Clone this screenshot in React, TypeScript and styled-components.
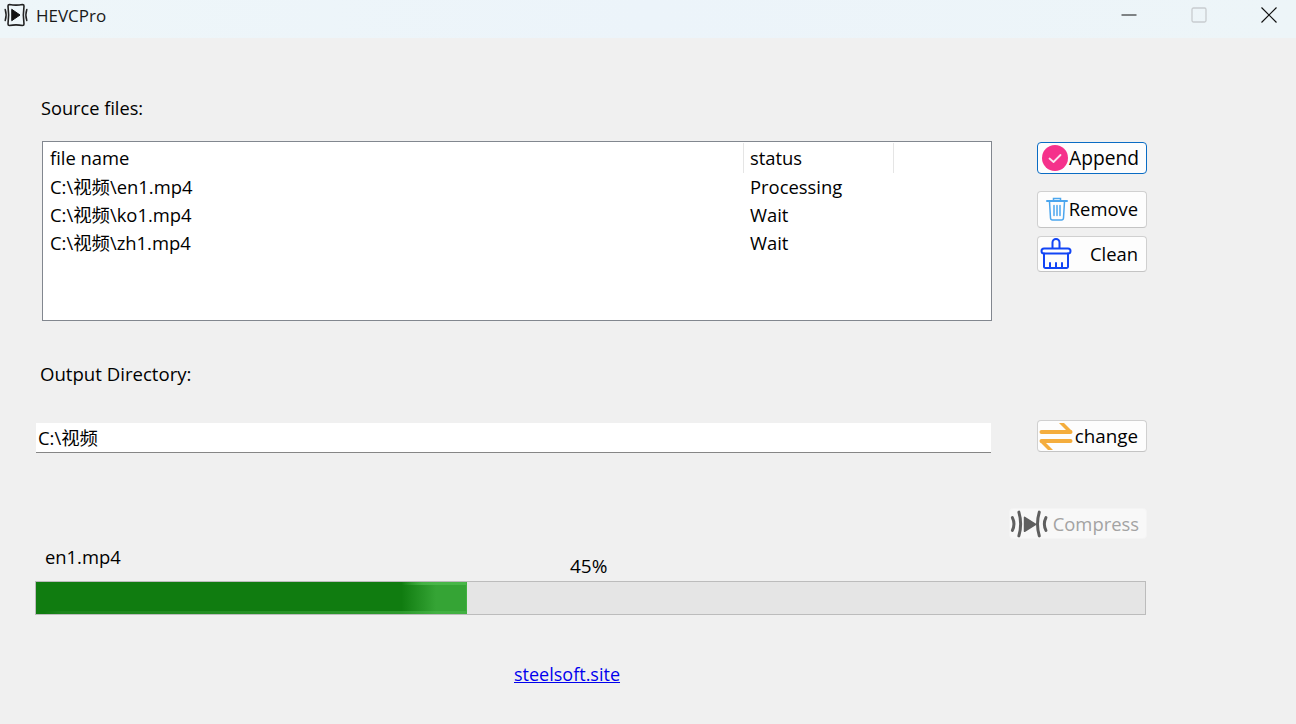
import React from "react";
import styled, { createGlobalStyle } from "styled-components";

const files = [
  { name: "C:\\视频\\en1.mp4", status: "Processing" },
  { name: "C:\\视频\\ko1.mp4", status: "Wait" },
  { name: "C:\\视频\\zh1.mp4", status: "Wait" },
];

const progress = 45;
// the native bar is drawn a little short of its value
const barWidth = 38.9;

const CompressIcon = () => (
  <svg width="38" height="38" viewBox="0 0 24 24" fill="none" stroke="#5f5f5f" strokeLinecap="round">
    <path d="M1.500 8c1.300 2.600 1.300 5.400 0 8" strokeWidth="1.900" />
    <path d="M5.600 4.500c1.500 5 1.500 10 0 15" strokeWidth="1.900" />
    <path d="M22.700 8c-1.300 2.600-1.300 5.400 0 8" strokeWidth="1.900" />
    <path d="M18.500 4.500c-1.500 5-1.500 10 0 15" strokeWidth="1.900" />
    <path d="M9.200 7.800l7 4.400-7 4.400z" fill="#5f5f5f" stroke="#5f5f5f" strokeWidth="1" strokeLinejoin="round" />
  </svg>
);

const AppLogo = () => (
  <LogoSvg width="24" height="24" viewBox="0 0 24 24" fill="none" stroke="#222" strokeLinecap="round">
    <path d="M5.500 1.500c4 .8 9 .8 13 0 1 0 1.500.5 1.500 1.500-.8 5.500-.8 12.500 0 18 0 1-.5 1.500-1.500 1.500-4-.8-9-.8-13 0-1 0-1.500-.5-1.500-1.500.8-5.500.8-12.500 0-18 0-1 .5-1.500 1.500-1.500z" strokeWidth="1.600" />
    <path d="M8 6.500l8 5.500-8 5.500z" fill="#111" stroke="#111" strokeWidth="1" strokeLinejoin="round" />
    <path d="M1.200 6.500c1.200 3.500 1.200 7.500 0 11" strokeWidth="1.500" />
    <path d="M22.800 6.500c-1.200 3.500-1.200 7.500 0 11" strokeWidth="1.500" />
  </LogoSvg>
);

const CheckIcon = () => (
  <svg width="26" height="26" viewBox="0 0 26 26">
    <circle cx="13" cy="13" r="13" fill="#f5318b" />
    <path d="M7.500 13.500l4 3.500 7-7" fill="none" stroke="#fbe3ee" strokeWidth="1.800" strokeLinecap="round" strokeLinejoin="round" />
  </svg>
);

const TrashIcon = () => (
  <svg width="22" height="24" viewBox="0 0 22 24" fill="none" stroke="#4ba6ee" strokeWidth="1.500" strokeLinecap="round">
    <path d="M1 4h20" strokeWidth="2" />
    <path d="M7.500 3.500V1.500h7v2" />
    <path d="M3.500 4.500l1 16.500c.1 1.200.8 2 2 2h9c1.200 0 1.900-.8 2-2l1-16.500" />
    <path d="M8 8.500v10M11 8.500v10M14 8.500v10" />
  </svg>
);

const BrushIcon = () => (
  <svg width="32" height="32" viewBox="0 0 32 32" fill="none" stroke="#1245f5" strokeWidth="2" strokeLinecap="round" strokeLinejoin="round">
    <path d="M12.500 10V4.500a3.500 3.500 0 0 1 7 0V10" />
    <rect x="1.500" y="10.500" width="29" height="5" rx="2.500" />
    <path d="M4 15.500v13.500a1.500 1.500 0 0 0 1.500 1h21a1.500 1.500 0 0 0 1.500-1V15.500" />
    <path d="M10 30v-5M16 30v-5M22 30v-5" />
  </svg>
);

const SwapIcon = () => (
  <svg width="34" height="28" viewBox="0 0 34 28" fill="#f4ad3d">
    <rect x="0.500" y="8" width="33" height="4" rx="2" />
    <path d="M20 1h5l8 8h-5z" />
    <rect x="0.500" y="17" width="33" height="4" rx="2" />
    <path d="M1 20h5l8 8H9z" />
  </svg>
);

const App = () => {
  return (
    <Window>
      <GlobalStyle />
      <TitleBar>
        <AppTitle>
          <AppLogo />
          <span>HEVCPro</span>
        </AppTitle>
        <WindowControls>
          <ControlButton>
            <svg width="16" height="16" viewBox="0 0 16 16"><path d="M0.500 8h15" stroke="#111" strokeWidth="1" /></svg>
          </ControlButton>
          <ControlButton>
            <svg width="16" height="16" viewBox="0 0 16 16"><rect x="1" y="1" width="14" height="14" rx="1.500" fill="none" stroke="#c8cccf" strokeWidth="1.300" /></svg>
          </ControlButton>
          <ControlButton>
            <svg width="16" height="16" viewBox="0 0 16 16"><path d="M0.500 0.500l15 15M15.500 0.500l-15 15" stroke="#111" strokeWidth="1.200" /></svg>
          </ControlButton>
        </WindowControls>
      </TitleBar>

      <Content>
        <SourceLabel>Source files:</SourceLabel>
        <SourceRow>
          <FileTable>
            <HeaderRow>
              <NameCell>file name</NameCell>
              <StatusHeader>status</StatusHeader>
            </HeaderRow>
            {files.map((file) => (
              <FileRow key={file.name}>
                <NameCell>{file.name}</NameCell>
                <StatusCell>{file.status}</StatusCell>
              </FileRow>
            ))}
          </FileTable>
          <ButtonColumn>
            <AppendButton>
              <CheckIcon />
              <span>Append</span>
            </AppendButton>
            <RemoveButton>
              <TrashIcon />
              <span>Remove</span>
            </RemoveButton>
            <CleanButton>
              <BrushIcon />
              <span>Clean</span>
            </CleanButton>
          </ButtonColumn>
        </SourceRow>

        <OutputLabel>Output Directory:</OutputLabel>
        <OutputRow>
          <PathInput readOnly value="C:\视频" />
          <ChangeButton>
            <SwapIcon />
            <span>change</span>
          </ChangeButton>
        </OutputRow>

        <CompressRow>
          <CompressButton disabled>
            <CompressIcon />
            <span>Compress</span>
          </CompressButton>
        </CompressRow>

        <ProgressInfo>
          <FileName>en1.mp4</FileName>
          <Percent>{progress}%</Percent>
        </ProgressInfo>
        <ProgressTrack>
          <ProgressFill style={{ width: `${barWidth}%` }} />
        </ProgressTrack>

        <Footer>
          <SiteLink href="#">steelsoft.site</SiteLink>
        </Footer>
      </Content>
    </Window>
  );
};

export default App;

const GlobalStyle = createGlobalStyle`
  html, body {
    margin: 0;
    padding: 0;
    background: #f0f0f0;
  }
  * {
    box-sizing: border-box;
  }
`;

const Window = styled.div`
  width: 1296px;
  height: 724px;
  overflow: hidden;
  background: #f0f0f0;
  color: #000;
  font-family: "Open Sans", "Noto Sans CJK SC", sans-serif;
  font-size: 18.4px;
`;

const TitleBar = styled.div`
  height: 38px;
  display: flex;
  justify-content: space-between;
  background: linear-gradient(90deg, #eef6f9 0%, #ecf4fa 50%, #edf5f8 100%);
`;

const AppTitle = styled.div`
  display: flex;
  align-items: center;
  gap: 8px;
  padding: 0 0 7px 4px;
  font-size: 17px;
  color: #1a1a1a;
`;

const LogoSvg = styled.svg`
  margin-bottom: 1px;
`;

const WindowControls = styled.div`
  display: flex;
  gap: 16px;
`;

const ControlButton = styled.div`
  width: 54px;
  height: 30px;
  display: flex;
  align-items: center;
  justify-content: center;
`;

const Content = styled.div`
  display: flex;
  flex-direction: column;
  width: 1147px;
  padding-left: 36px;
`;

const SourceLabel = styled.div`
  margin: 58px 0 0 5px;
  height: 25px;
  font-size: 18.200px;
  line-height: 25px;
`;

const SourceRow = styled.div`
  display: flex;
  justify-content: space-between;
  margin-top: 20px;
  padding-left: 6px;
`;

const FileTable = styled.div`
  width: 950px;
  height: 180px;
  background: #fff;
  border: 1px solid #82878f;
`;

const HeaderRow = styled.div`
  display: flex;
  height: 31px;
  padding-top: 1px;
  line-height: 30px;
`;

const FileRow = styled.div`
  display: flex;
  height: 28px;
  line-height: 28px;
`;

const NameCell = styled.div`
  width: 700px;
  padding-left: 7px;
  white-space: nowrap;
`;

const StatusCell = styled.div`
  padding-left: 7px;
`;

const StatusHeader = styled(StatusCell)`
  width: 151px;
  height: 30px;
  border-left: 1px solid #e5e5e5;
  border-right: 1px solid #e5e5e5;
  padding-left: 6px;
`;

const ButtonColumn = styled.div`
  width: 110px;
  display: flex;
  flex-direction: column;
  padding-top: 1px;
`;

const ActionButton = styled.button`
  width: 110px;
  display: flex;
  align-items: center;
  justify-content: space-between;
  padding: 0 8px 0 4px;
  background: #fdfdfd;
  border: 1px solid #d0d0d0;
  border-bottom-color: #c4c4c4;
  border-radius: 4px;
  color: #000;
  font-family: inherit;
  font-size: 18.4px;
  line-height: 1;
`;

const AppendButton = styled(ActionButton)`
  height: 32px;
  padding: 0 7px 0 4px;
  border-color: #0a6cc4;
  font-size: 19.200px;
`;

const RemoveButton = styled(ActionButton)`
  height: 37px;
  margin-top: 17px;
  padding: 0 8px 1px 8px;
`;

const CleanButton = styled(ActionButton)`
  height: 36px;
  margin-top: 8px;
  padding-left: 2px;
`;

const OutputLabel = styled.div`
  margin: 40px 0 0 4px;
  height: 25px;
  font-size: 18.600px;
  line-height: 25px;
`;

const OutputRow = styled.div`
  display: flex;
  justify-content: space-between;
  align-items: flex-start;
  margin-top: 34px;
`;

const PathInput = styled.input`
  width: 955px;
  height: 30px;
  margin-top: 3px;
  padding: 0 2px 2px;
  border: none;
  border-bottom: 1px solid #868686;
  background: #fff;
  color: #000;
  font-family: inherit;
  font-size: 18.4px;
  outline: none;
`;

const ChangeButton = styled(ActionButton)`
  height: 32px;
  padding-left: 1px;
  font-size: 18.800px;
`;

const CompressRow = styled.div`
  display: flex;
  justify-content: flex-end;
  margin-top: 55px;
`;

const CompressButton = styled.button`
  width: 138px;
  height: 31px;
  display: flex;
  align-items: center;
  justify-content: space-between;
  padding: 0 7px 0 0;
  background: #f8f8f8;
  border: 1px solid #f4f4f4;
  border-radius: 4px;
  color: #a3a3a3;
  font-family: inherit;
  font-size: 18.4px;
`;

const ProgressInfo = styled.div`
  position: relative;
  height: 42px;
  padding-left: 9px;
`;

const FileName = styled.div`
  height: 25px;
  margin-top: 5px;
  line-height: 25px;
`;

const Percent = styled.div`
  position: absolute;
  left: 534px;
  top: 15px;
  font-size: 19px;
  line-height: 25px;
`;

const ProgressTrack = styled.div`
  width: 1111px;
  height: 34px;
  margin-left: -1px;
  background: #e5e5e5;
  border: 1px solid #bcbcbc;
`;

const ProgressFill = styled.div`
  height: 100%;
  border-right: 1px solid #3fb13f;
  background:
    linear-gradient(90deg, transparent 85%, rgba(80, 190, 80, 0.7) 90%) top / 100% 3px no-repeat,
    linear-gradient(90deg, transparent 2%, rgba(50, 150, 50, 0.35) 6%, rgba(80, 190, 80, 0.5) 96%) bottom / 100% 3px no-repeat,
    linear-gradient(90deg, #107c10 0%, #107c10 85%, #35a435 93%, #35a435 100%);
`;

const Footer = styled.div`
  display: flex;
  padding-left: 478px;
  margin-top: 47px;
`;

const SiteLink = styled.a`
  color: #0000ee;
  font-size: 18px;
  text-decoration: underline;
  line-height: 25px;
`;
